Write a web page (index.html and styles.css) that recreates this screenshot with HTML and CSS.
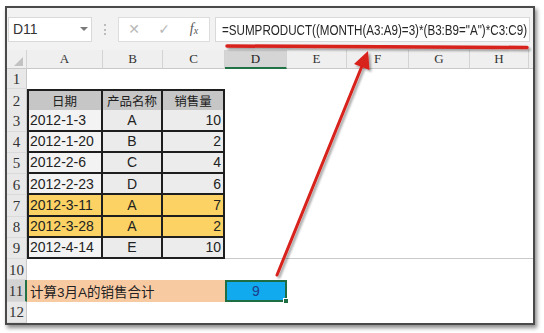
FILE: index.html
```html
<!DOCTYPE html>
<html lang="zh">
<head>
<meta charset="utf-8">
<title>SUMPRODUCT</title>
<link rel="stylesheet" href="styles.css">
</head>
<body>
<div class="shot">
  <div class="window">
    <div class="fbar">
      <div class="namebox"><span>D11</span><span class="dd"></span></div>
      <div class="sep"><span class="dots"></span></div>
      <div class="btns"><span class="ic x">✕</span><span class="ic ok">✓</span><span class="ic fx">f<span class="sx">x</span></span></div>
      <div class="formula"><span class="ftext">=SUMPRODUCT((MONTH(A3:A9)=3)*(B3:B9="A")*C3:C9)</span></div>
    </div>
    <div class="sheet">
      <div class="row hdr">
        <div class="ch corner"><span class="tri"></span></div>
        <div class="ch">A</div><div class="ch">B</div><div class="ch">C</div>
        <div class="ch sel">D</div><div class="ch">E</div><div class="ch">F</div>
        <div class="ch">G</div><div class="ch">H</div><div class="ch fill"></div>
      </div>
      <div class="row r1"><div class="rh">1</div></div>
      <div class="row top">
        <div class="rh">2</div>
        <div class="t a th">日期</div><div class="t b th">产品名称</div><div class="t c th">销售量</div>
      </div>
      <div class="row"><div class="rh">3</div><div class="t a">2012-1-3</div><div class="t b">A</div><div class="t c">10</div></div>
      <div class="row"><div class="rh">4</div><div class="t a">2012-1-20</div><div class="t b">B</div><div class="t c">2</div></div>
      <div class="row"><div class="rh">5</div><div class="t a">2012-2-6</div><div class="t b">C</div><div class="t c">4</div></div>
      <div class="row"><div class="rh">6</div><div class="t a">2012-2-23</div><div class="t b">D</div><div class="t c">6</div></div>
      <div class="row"><div class="rh">7</div><div class="t a y">2012-3-11</div><div class="t b y">A</div><div class="t c y">7</div></div>
      <div class="row"><div class="rh">8</div><div class="t a y">2012-3-28</div><div class="t b y">A</div><div class="t c y">2</div></div>
      <div class="row"><div class="rh">9</div><div class="t a">2012-4-14</div><div class="t b">E</div><div class="t c">10</div><div class="rest"></div></div>
      <div class="row"><div class="rh">10</div></div>
      <div class="row">
        <div class="rh sel">11</div>
        <div class="peach">计算3月A的销售合计</div>
        <div class="d11">9<span class="handle"></span></div>
      </div>
      <div class="row"><div class="rh">12</div></div>
    </div>
  </div>
  <svg class="overlay" width="544" height="333" viewBox="0 0 544 333" aria-hidden="true">
    <defs>
      <filter id="sh" x="-20%" y="-20%" width="140%" height="140%">
        <feDropShadow dx="2" dy="2" stdDeviation="1.2" flood-color="#000" flood-opacity="0.35"/>
      </filter>
    </defs>
    <g filter="url(#sh)">
      <path d="M227 46 L527 47.5" stroke="#d8201c" stroke-width="3.5" stroke-linecap="round" fill="none"/>
      <path d="M277 275 L362 66" stroke="#d8201c" stroke-width="3" stroke-linecap="round" fill="none"/>
      <polygon points="368,51 369.5,70 354,64" fill="#d8201c"/>
    </g>
  </svg>
</div>
</body>
</html>
```

FILE: styles.css
```css
* { box-sizing: border-box; }

body {
  margin: 0;
  background: #fff;
  font-family: "Liberation Sans", "Noto Sans CJK SC", sans-serif;
  color: #222;
}

.shot {
  position: relative;
  width: 544px;
  height: 333px;
  padding: 6px 0 0 5px;
  overflow: hidden;
}

.window {
  width: 530px;
  height: 319px;
  border: 2px solid #4a4a4a;
  box-shadow: 2px 3px 4px rgba(0, 0, 0, 0.45);
  background: #fff;
  display: flex;
  flex-direction: column;
}

/* formula bar */
.fbar {
  flex: none;
  height: 42px;
  background: #f2f2f2;
  display: flex;
  align-items: center;
}

.namebox {
  margin-left: 1px;
  width: 84px;
  height: 25px;
  background: #fff;
  border: 1px solid #d9d9d9;
  display: flex;
  align-items: center;
  justify-content: space-between;
  padding: 0 3px 0 4px;
  font-size: 14px;
  color: #333;
}

.dd {
  width: 0;
  height: 0;
  border-left: 4px solid transparent;
  border-right: 4px solid transparent;
  border-top: 4px solid #7a7a7a;
}

.sep {
  width: 26px;
  display: flex;
  justify-content: center;
}

.dots {
  width: 0;
  height: 11px;
  border-left: 2px dotted #bdbdbd;
}

.btns {
  width: 92px;
  height: 25px;
  background: #fff;
  border: 1px solid #dddddd;
  display: flex;
  align-items: center;
}

.ic {
  width: 30px;
  text-align: center;
  color: #b8b8b8;
  font-size: 14px;
  font-family: "DejaVu Sans", sans-serif;
}

.ic.fx {
  color: #555;
  font-family: "Liberation Serif", serif;
  font-style: italic;
  font-size: 14px;
}

.sx {
  font-size: 10px;
  vertical-align: -1px;
}

.formula {
  flex: 1;
  margin-left: 5px;
  margin-right: 3px;
  height: 25px;
  background: #fff;
  border: 1px solid #d9d9d9;
  padding-left: 6px;
  display: flex;
  align-items: center;
  overflow: hidden;
}

.ftext {
  display: inline-block;
  font-size: 15px;
  white-space: nowrap;
  color: #262626;
  transform: scaleX(0.775);
  transform-origin: left center;
}

/* sheet */
.sheet {
  flex: 1;
  display: flex;
  flex-direction: column;
}

.row {
  display: grid;
  grid-template-columns: 20px 76px 60px 62px 62px 60px 62px 61px 59px 1fr;
  height: 21.27px;
  flex: none;
}

.row.hdr {
  height: 19px;
  background: #efefef;
}

.row.r1 { height: 20px; }

.ch {
  border-right: 1px solid #d3d3d3;
  border-bottom: 1px solid #c8c8c8;
  display: flex;
  align-items: center;
  justify-content: center;
  font-family: "Liberation Serif", serif;
  font-size: 13px;
  color: #333;
}

.ch.sel {
  background: #d5d5d5;
  border-bottom: 2px solid #217346;
  color: #222;
}

.ch.fill { border-right: none; }

.corner {
  position: relative;
  background: #efefef;
}

.tri {
  position: absolute;
  right: 3px;
  bottom: 2px;
  width: 0;
  height: 0;
  border-left: 9px solid transparent;
  border-bottom: 9px solid #c2c2c2;
}

.rh {
  background: #e8e8e8;
  border-right: 1px solid #c8c8c8;
  border-bottom: 1px solid #dadada;
  display: flex;
  align-items: center;
  justify-content: center;
  font-family: "Liberation Serif", serif;
  font-size: 15px;
  color: #333;
  padding-top: 2px;
}

.rh.sel {
  background: #d3d3d3;
  border-right: 2px solid #217346;
}

.t {
  border-right: 2px solid #1e1e1e;
  border-bottom: 2px solid #1e1e1e;
  display: flex;
  align-items: center;
  padding: 0 2px;
  background: #f3f3f3;
  font-size: 14px;
  color: #222;
  white-space: nowrap;
}

.top .t { border-top: 2px solid #1e1e1e; }

.t.a {
  border-left: 2px solid #1e1e1e;
  justify-content: flex-start;
  padding-left: 1px;
}

.t.b {
  justify-content: center;
  background: #ebebeb;
}

.t.c {
  justify-content: flex-end;
  background: #ececec;
}

.t.th {
  background: #c6c6c6;
  justify-content: center;
  font-size: 12.5px;
  color: #222;
}

.t.y { background: #fbd263; }

.rest {
  grid-column: 5 / -1;
  border-bottom: 1px solid #c9c9c9;
}

.peach {
  grid-column: 2 / 5;
  background: #f8caa2;
  padding-left: 3px;
  display: flex;
  align-items: center;
  font-size: 13.5px;
  color: #222;
  white-space: nowrap;
}

.d11 {
  position: relative;
  background: #12aaee;
  border: 2px solid #1f6e43;
  display: flex;
  align-items: center;
  justify-content: center;
  font-size: 14px;
  color: #1d3d8c;
}

.handle {
  position: absolute;
  right: -4px;
  bottom: -4px;
  width: 6px;
  height: 6px;
  background: #1f6e43;
  border: 1px solid #fff;
}

.overlay {
  position: absolute;
  left: 0;
  top: 0;
  pointer-events: none;
}
```
